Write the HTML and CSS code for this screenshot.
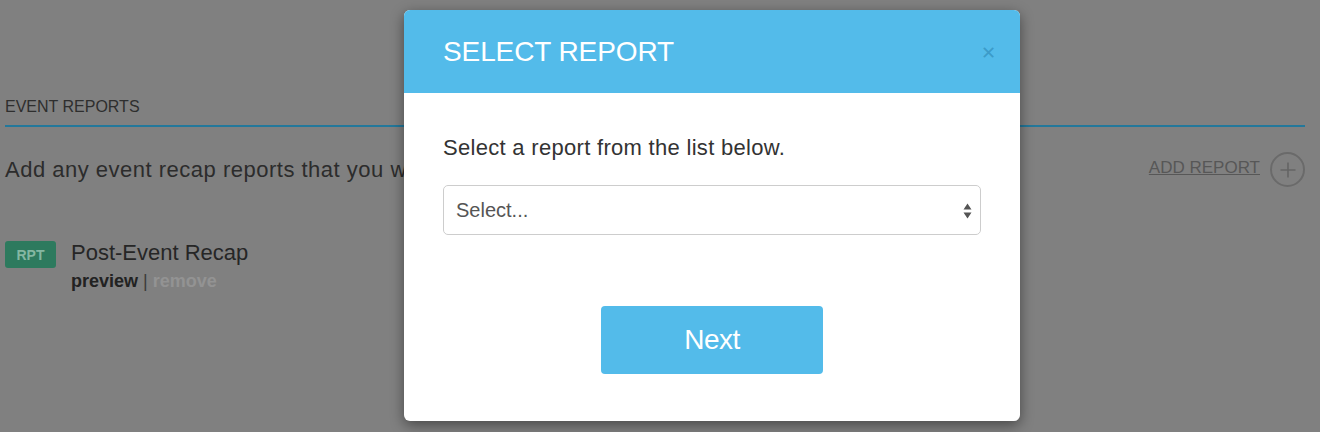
FILE: index.html
```html
<!DOCTYPE html>
<html>
<head>
<meta charset="utf-8">
<link rel="stylesheet" href="styles.css">
</head>
<body>
<div class="page">
  <h2 class="section-title">Event Reports</h2>
  <div class="intro">
    <p class="intro-text">Add any event recap reports that you would like to include with this event.</p>
    <a class="add-link" href="#"><span class="add-text">ADD REPORT</span><span class="add-circle"><svg width="20" height="20" viewBox="0 0 20 20"><path d="M10 2.5v15M2.5 10h15" stroke="#646464" stroke-width="1.6" fill="none"/></svg></span></a>
  </div>
  <div class="report">
    <span class="badge">RPT</span>
    <div class="report-info">
      <div class="report-name">Post-Event Recap</div>
      <div class="report-actions"><a class="act-preview" href="#">preview</a> <span class="sep">|</span> <a class="act-remove" href="#">remove</a></div>
    </div>
  </div>
</div>

<div class="backdrop"></div>
<div class="modal">
  <div class="modal-header">
    <h1 class="modal-title">SELECT REPORT</h1>
    <span class="modal-close">&#x2715;</span>
  </div>
  <div class="modal-body">
    <p class="modal-text">Select a report from the list below.</p>
    <div class="select">
      <span class="select-value">Select...</span>
      <svg class="select-arrows" width="9" height="16" viewBox="0 0 9 16"><path d="M4.5 0.5L8.5 6.5H0.5Z M4.5 15.5L8.5 9.5H0.5Z" fill="#555"/></svg>
    </div>
  </div>
  <div class="modal-footer">
    <button class="btn-next">Next</button>
  </div>
</div>
</body>
</html>
```

FILE: styles.css
```css
html, body {
  margin: 0;
  padding: 0;
  height: 100%;
}
body {
  background: #808080;
  font-family: "Liberation Sans", Arial, sans-serif;
  color: #333;
  overflow: hidden;
  position: relative;
}
.page {
  padding: 0 15px 0 5px;
}
.section-title {
  margin: 0;
  padding-top: 98px;
  padding-bottom: 9px;
  font-size: 16px;
  font-weight: normal;
  text-transform: uppercase;
  color: #2e2e2e;
  border-bottom: 2px solid #23789b;
  line-height: 18px;
}
.intro {
  display: flex;
  justify-content: space-between;
  align-items: center;
  margin-top: 25px;
}
.intro-text {
  margin: 0;
  font-size: 22px;
  letter-spacing: 0.5px;
  color: #2c2c2c;
  white-space: nowrap;
  line-height: 34px;
}
.add-link {
  display: flex;
  align-items: center;
  gap: 10px;
  text-decoration: none;
}
.add-text {
  font-size: 17px;
  color: #575757;
  text-decoration: underline;
  letter-spacing: 0;
  margin-top: -3px;
}
.add-circle {
  width: 31px;
  height: 31px;
  border: 2px solid #6a6a6a;
  border-radius: 50%;
  display: flex;
  align-items: center;
  justify-content: center;
}
.report {
  display: flex;
  align-items: flex-start;
  gap: 15px;
  margin-top: 53px;
}
.badge {
  margin-top: 1px;
  background: #2d7a5e;
  color: #84b7a2;
  font-size: 14px;
  font-weight: bold;
  border-radius: 3px;
  width: 51px;
  height: 27px;
  display: flex;
  align-items: center;
  justify-content: center;
}
.report-name {
  font-size: 22px;
  color: #262626;
  line-height: 26px;
}
.report-actions {
  font-size: 18px;
  line-height: 22px;
  margin-top: 4px;
  color: #2a2a2a;
}
.report-actions a {
  text-decoration: none;
}
.act-preview {
  color: #222;
  font-weight: bold;
}
.sep {
  color: #3a3a3a;
}
.act-remove {
  color: #939393;
  font-weight: bold;
}

.backdrop {
  position: absolute;
  inset: 0;
  background: transparent;
}
.modal {
  position: absolute;
  left: 404px;
  top: 10px;
  width: 616px;
  height: 411px;
  background: #fff;
  border-radius: 6px;
  overflow: hidden;
  box-shadow: 0 4px 14px rgba(0, 0, 0, 0.45);
  display: flex;
  flex-direction: column;
}
.modal-header {
  height: 83px;
  background: #53bbea;
  display: flex;
  align-items: center;
  justify-content: space-between;
  padding: 0 24px 0 39px;
  flex-shrink: 0;
}
.modal-title {
  margin: 0;
  font-size: 28px;
  font-weight: normal;
  color: #fff;
  letter-spacing: -0.1px;
}
.modal-close {
  color: #3c9bc9;
  font-size: 18px;
  margin-top: 2px;
}
.modal-body {
  padding: 42px 39px 0 39px;
}
.modal-text {
  margin: 0;
  font-size: 22px;
  letter-spacing: 0.3px;
  color: #333;
  line-height: 26px;
}
.select {
  margin-top: 24px;
  height: 48px;
  border: 1px solid #cdcdcd;
  border-radius: 5px;
  display: flex;
  align-items: center;
  justify-content: space-between;
  padding: 0 8px 0 12px;
}
.select-value {
  font-size: 20px;
  color: #555;
}
.select-arrows {
  margin-top: 1px;
}
.modal-footer {
  display: flex;
  justify-content: center;
  padding-top: 71px;
}
.btn-next {
  width: 222px;
  height: 68px;
  border: none;
  border-radius: 4px;
  background: #53bbea;
  color: #fff;
  font-family: "Liberation Sans", Arial, sans-serif;
  font-size: 28px;
  letter-spacing: -0.5px;
}
```
